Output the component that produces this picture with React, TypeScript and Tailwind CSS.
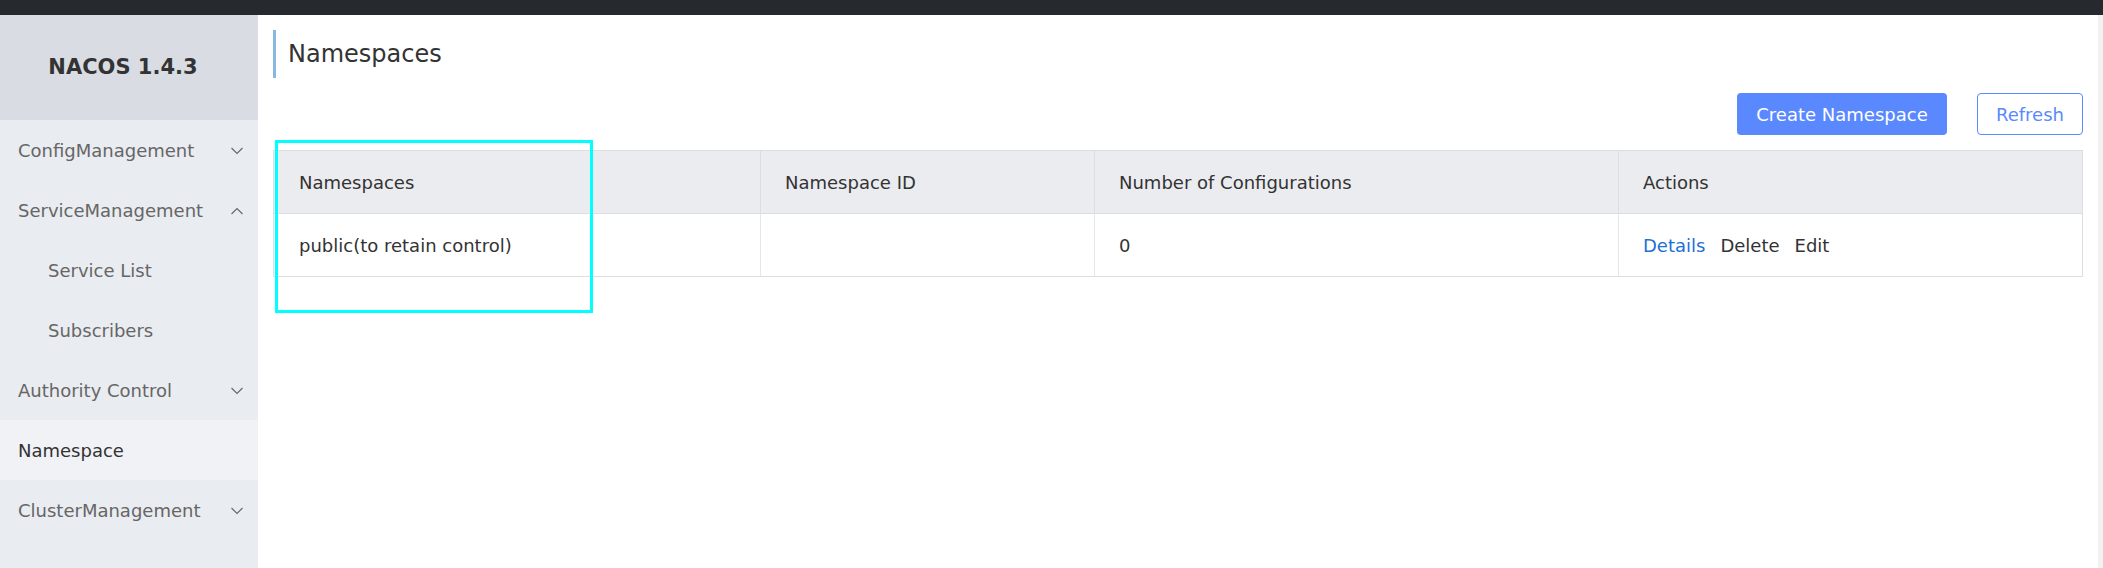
import React from 'react';

type MenuItem = {
  label: string;
  sub?: boolean;
  arrow?: 'up' | 'down';
  active?: boolean;
};

const menu: MenuItem[] = [
  { label: 'ConfigManagement', arrow: 'down' },
  { label: 'ServiceManagement', arrow: 'up' },
  { label: 'Service List', sub: true },
  { label: 'Subscribers', sub: true },
  { label: 'Authority Control', arrow: 'down' },
  { label: 'Namespace', active: true },
  { label: 'ClusterManagement', arrow: 'down' },
];

const Chevron: React.FC<{ dir: 'up' | 'down' }> = ({ dir }) => (
  <svg width="12" height="8" viewBox="0 0 12 8" fill="none" stroke="#666" strokeWidth="1.1">
    {dir === 'down' ? <polyline points="0.5,1 6,6.5 11.5,1" /> : <polyline points="0.5,7 6,1.5 11.5,7" />}
  </svg>
);

const App: React.FC = () => {
  return (
    <div className="w-[2103px] h-[568px] flex flex-col overflow-hidden bg-white font-['DejaVu_Sans',sans-serif]">
      {/* top bar */}
      <div className="h-[15px] shrink-0 bg-[#262a2f]" />

      <div className="flex flex-1 min-h-0">
        {/* Sidebar */}
        <aside className="w-[258px] shrink-0 bg-[#e9ecf0]">
          <div className="h-[105px] bg-[#d9dde3] flex items-center justify-center pr-[12px]">
            <span className="text-[21px] font-bold text-[#333]">NACOS 1.4.3</span>
          </div>
          {menu.map((m) => (
            <div
              key={m.label}
              className={`h-[60px] flex items-center justify-between pr-[15px] pt-[1px] text-[18px] ${
                m.sub ? 'pl-[48px]' : 'pl-[18px]'
              } ${m.active ? 'bg-[#f1f2f6] text-[#333]' : 'text-[#666]'}`}
            >
              <span>{m.label}</span>
              {m.arrow && <Chevron dir={m.arrow} />}
            </div>
          ))}
        </aside>

        {/* Main */}
        <main className="relative flex-1 px-[15px] pt-[15px]">
          <div className="h-[48px] border-l-[3px] border-[#88b7e0] pl-[12px] flex items-center">
            <h1 className="text-[24px] text-[#333]">Namespaces</h1>
          </div>

          <div className="mt-[15px] flex justify-end gap-[30px]">
            <button className="w-[210px] h-[42px] rounded-[4px] bg-[#5a89ff] text-white text-[18px]">
              Create Namespace
            </button>
            <button className="w-[106px] h-[42px] rounded-[4px] border border-[#5a89ff] bg-white text-[#5a89ff] text-[18px]">
              Refresh
            </button>
          </div>

          <div className="mt-[15px] border border-[#dcdee3] text-[18px] text-[#333]">
            <div className="grid grid-cols-[486px_334px_524px_1fr] h-[63px] bg-[#ebecf0] border-b border-[#dcdee3]">
              <div className="flex items-center px-[25px]">Namespaces</div>
              <div className="flex items-center px-[24px] border-l border-[#dcdee3]">Namespace ID</div>
              <div className="flex items-center px-[24px] border-l border-[#dcdee3]">Number of Configurations</div>
              <div className="flex items-center px-[24px] border-l border-[#dcdee3]">Actions</div>
            </div>
            <div className="grid grid-cols-[486px_334px_524px_1fr] h-[62px]">
              <div className="flex items-center px-[25px]">public(to retain control)</div>
              <div className="flex items-center px-[24px] border-l border-[#e6e7eb]" />
              <div className="flex items-center px-[24px] border-l border-[#e6e7eb]">0</div>
              <div className="flex items-center gap-[15px] px-[24px] border-l border-[#e6e7eb]">
                <span className="text-[#1f6fd6]">Details</span>
                <span>Delete</span>
                <span>Edit</span>
              </div>
            </div>
          </div>

          {/* highlight annotation */}
          <div className="absolute left-[17px] top-[125px] w-[318px] h-[173px] border-[3px] border-[#00ffff] pointer-events-none" />
        </main>

        {/* scrollbar track */}
        <div className="w-[5px] shrink-0 bg-[#f1f1f1]" />
      </div>
    </div>
  );
};

export default App;
